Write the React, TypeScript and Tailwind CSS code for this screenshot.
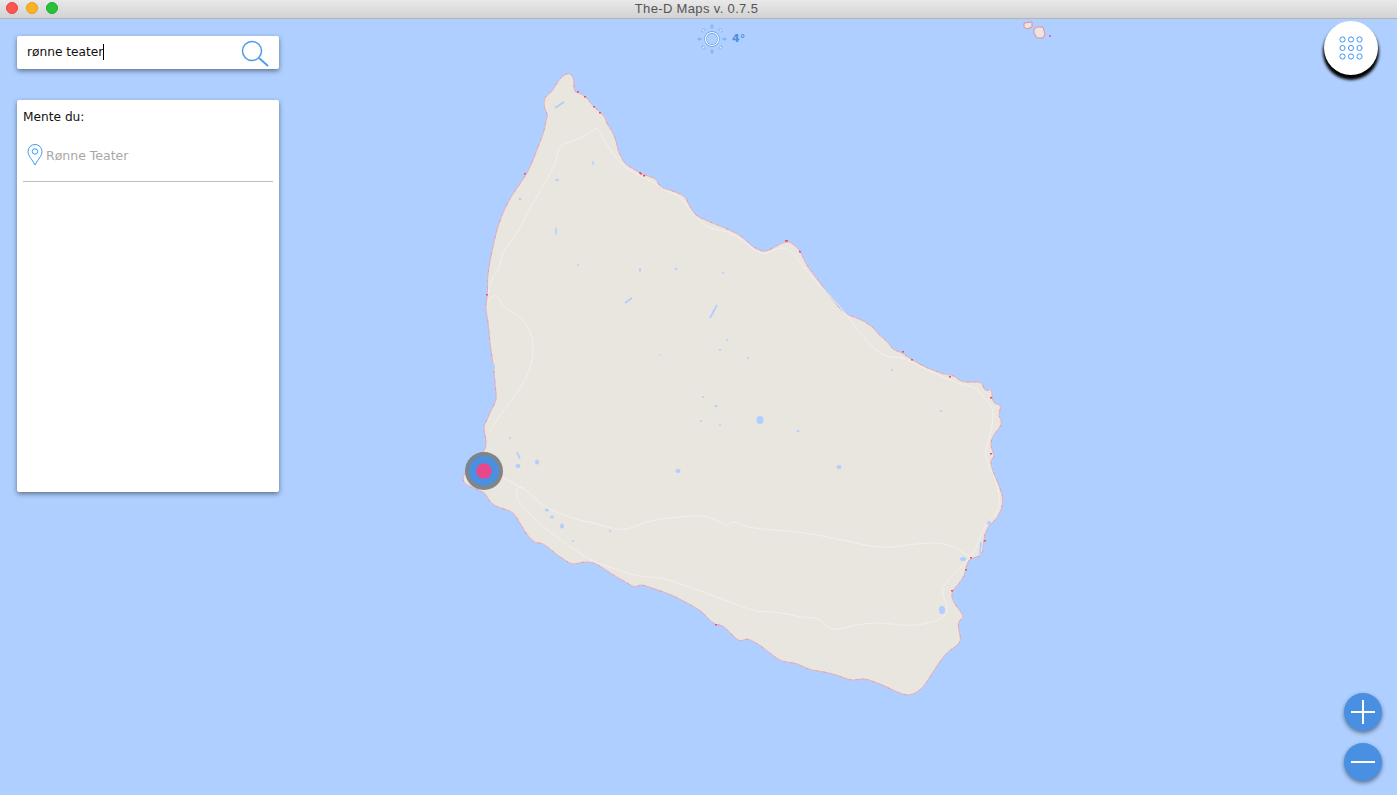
import React from "react";

const coast =
  "568,73 572,75 574,80 574,92 580,93 586,97 590,102 594,107 600,112 605,117 607,124 612,131 616,140 618,151 622,158 625,164 632,168 640,173 648,176 655,178 658,183 661,188 670,190 681,194 686,198 688,203 692,210 695,215 705,220 720,226 732,231 743,237 750,245 762,252 770,250 776,246 787,241 792,243 800,250 804,260 810,270 818,280 826,291 833,300 840,309 848,315 860,319 872,326 878,334 888,342 893,350 901,352 908,357 916,362 927,368 936,371 943,374 952,375 957,378 962,382 972,382 982,382 985,392 992,388 992,403 1002,405 998,415 1003,424 993,435 990,445 995,457 990,460 993,473 1000,487 1004,502 998,518 987,527 983,542 983,555 972,558 967,562 965,575 958,585 951,592 953,602 965,617 959,620 958,628 962,642 950,650 943,657 933,672 923,688 913,695 903,695 887,687 875,682 863,678 853,681 842,677 830,673 818,671 807,669 797,663 782,662 771,654 760,645 747,638 740,642 730,633 723,625 715,625 708,618 700,610 687,603 672,595 655,589 640,584 635,588 624,581 613,575 603,568 593,562 582,562 572,565 565,560 557,555 549,548 542,543 535,543 530,538 525,532 519,521 512,511 500,508 490,503 485,492 473,488 463,483 463,475 470,468 484,452 487,443 483,427 487,420 491,410 497,400 495,385 494,370 490,345 488,320 485,307 488,293 487,278 492,250 498,225 505,208 512,195 522,181 530,168 538,147 544,132 546,120 548,115 544,108 544,97 552,92 558,81 563,76";

const roads = [
  "597,128 587,135 575,140 563,144 558,148 556,162 545,183 533,203 525,218 517,233 508,245 502,253 500,267 490,282 488,295",
  "597,128 604,139 612,153 625,168 640,176 655,183 662,189 680,196 690,210 706,228 727,231 743,240 762,256 775,249 785,247 795,255 810,276 820,285 832,298 848,316 857,330 882,357 900,357 908,360 927,370 957,383 977,388 983,397 993,407 993,423 988,443 984,455 997,482 1000,503 997,513 983,528 978,543 972,557 943,585 942,593 951,617 913,627 880,622 853,625 833,631 823,623 818,618 798,617 780,612 758,612 740,606 717,597 670,580 657,577 640,577 613,568 593,562 568,545 550,532 533,518 517,500 516,488 523,487",
  "490,472 507,480 527,490 545,508 580,521 592,522 622,532 647,521 677,517 708,515 727,527 730,522 737,522 747,528 803,532 847,541 883,549 920,543 947,543 971,557",
  "488,300 495,293 500,300 503,308 520,315 530,330 534,345 531,370 516,395 505,408 490,430",
];

// small lakes, cx cy rx ry
const lakes: [number, number, number, number][] = [
  [593, 163, 0.8, 2], [556, 231, 0.8, 4], [640, 270, 1, 2], [557, 180, 2, 1], [520, 199, 1.5, 1],
  [676, 269, 1.5, 1], [723, 273, 1.5, 0.8], [578, 265, 1, 1], [510, 438, 1, 1], [537, 462, 2, 2.5],
  [518, 466, 2.5, 2], [547, 510, 2, 1.5], [552, 517, 2, 1.5], [562, 526, 2, 2.5], [573, 541, 1, 1],
  [839, 467, 2.5, 2], [760, 420, 3.5, 4], [798, 431, 1.5, 1], [892, 370, 1, 1], [941, 411, 1.5, 0.7],
  [963, 559, 3, 2], [989, 523, 2, 2], [942, 610, 3, 4], [703, 397, 1, 1], [716, 406, 1.5, 1],
  [678, 471, 2.5, 2], [493, 367, 2, 3], [495, 380, 1.5, 1], [727, 340, 1, 1], [720, 350, 1, 1],
  [748, 358, 1, 1], [701, 421, 1, 1], [720, 425, 1, 1], [660, 355, 0.7, 0.7], [610, 531, 1, 1],
];

const lakeStrokes = [
  "555,108 564,102",
  "632,298 625,303",
  "717,305 710,318",
  "517,452 520,459",
  "981,542 980,554",
];

const redSpots: [number, number][] = [
  [640, 173], [787, 241], [578, 92], [594, 107], [600, 113], [525, 174], [487, 295], [800, 252],
  [950, 377], [991, 398], [991, 454], [971, 558], [966, 570], [952, 591], [912, 360], [985, 541],
  [716, 625], [641, 174], [644, 176], [585, 97], [786, 241], [903, 352],
];

// rounds the corners of a point list, so the coast and the roads read as curves
const smooth = (points: string, closed = false) => {
  const p = points.split(" ").map((s) => s.split(",").map(Number));
  const mid = (a: number[], b: number[]) => `${(a[0] + b[0]) / 2},${(a[1] + b[1]) / 2}`;
  if (closed) {
    let d = `M${mid(p[p.length - 1], p[0])}`;
    p.forEach((pt, i) => {
      d += ` Q${pt[0]},${pt[1]} ${mid(pt, p[(i + 1) % p.length])}`;
    });
    return `${d} Z`;
  }
  let d = `M${p[0][0]},${p[0][1]}`;
  for (let i = 1; i < p.length - 1; i++) {
    d += ` Q${p[i][0]},${p[i][1]} ${mid(p[i], p[i + 1])}`;
  }
  return `${d} L${p[p.length - 1][0]},${p[p.length - 1][1]}`;
};

const MapCanvas = () => (
  <svg className="absolute inset-0 h-full w-full" viewBox="0 0 1397 776">
    <g transform="translate(0 -19)">
      <path d={smooth(coast, true)} fill="#e9e5df" stroke="#e6b0bd" strokeWidth="1" />
      <path d={smooth(coast, true)} fill="none" stroke="#e58aa0" strokeWidth="0.7" strokeDasharray="2 5 1 9" />
      {roads.map((d) => (
        <path key={d} d={smooth(d)} fill="none" stroke="#f4f1ed" strokeWidth="0.9" />
      ))}
      {lakes.map(([cx, cy, rx, ry]) => (
        <ellipse key={`${cx}-${cy}`} cx={cx} cy={cy} rx={rx} ry={ry} fill="#aecfff" />
      ))}
      {lakeStrokes.map((d) => (
        <polyline key={d} points={d} fill="none" stroke="#aecfff" strokeWidth="1.7" />
      ))}
      {redSpots.map(([x, y]) => (
        <rect key={`${x}-${y}`} x={x - 1} y={y - 1} width="2" height="1.5" fill="#ee4f68" />
      ))}
      <polygon points="1024,23 1032,22 1032,27 1027,29 1024,27" fill="#e9e5df" stroke="#e88a9f" />
      <polygon points="1034,29 1037,27 1043,27 1045,34 1043,38 1037,38 1034,33" fill="#e9e5df" stroke="#e88a9f" />
      <rect x="1049" y="35" width="2" height="2" fill="#ee6f88" />
      <circle cx="484" cy="471" r="19" fill="#767a7e" fillOpacity="0.9" />
      <circle cx="484" cy="471" r="15" fill="#4a90e2" />
      <circle cx="484" cy="471" r="7.8" fill="#e8478b" />
    </g>
  </svg>
);

const SearchIcon = () => (
  <svg width="30" height="28" viewBox="0 0 30 28" fill="none" stroke="#4f9bef">
    <circle cx="12" cy="12" r="9.5" strokeWidth="1.5" />
    <path d="M19 19 L28 27" strokeWidth="1.8" />
  </svg>
);

const PinIcon = () => (
  <svg width="16" height="22" viewBox="0 0 16 22" fill="none" stroke="#3f97f5" strokeWidth="1">
    <path d="M8 21 C5 15 1 12 1 7.5 A7 7 0 0 1 15 7.5 C15 12 11 15 8 21 Z" />
    <circle cx="8" cy="7.5" r="2.7" />
  </svg>
);

const SunIcon = () => (
  <svg width="30" height="30" viewBox="0 0 30 30" fill="none">
    <circle cx="15" cy="15" r="6.5" stroke="#5a9be6" strokeWidth="2.4" />
    <circle cx="15" cy="15" r="6.5" stroke="#ffffff" strokeWidth="1.2" />
    {[
      [15, 2.5, 0],
      [15, 27.5, 0],
      [2.5, 15, 90],
      [27.5, 15, 90],
      [6.5, 6.5, 45],
      [23.5, 23.5, 45],
      [23.5, 6.5, -45],
      [6.5, 23.5, -45],
    ].map(([x, y, r]) => (
      <ellipse
        key={`${x}-${y}`}
        cx={x}
        cy={y}
        rx="0.9"
        ry="2"
        fill={r === 0 || r === 90 ? "none" : "#ffffff"}
        stroke="#5a9be6"
        strokeWidth="0.6"
        transform={`rotate(${r} ${x} ${y})`}
      />
    ))}
  </svg>
);

const GridIcon = () => (
  <svg width="26" height="26" viewBox="0 0 26 26" fill="none" stroke="#3f97f5" strokeWidth="1">
    {[4.5, 13, 21.5].map((y) =>
      [4.5, 13, 21.5].map((x) => <circle key={`${x}-${y}`} cx={x} cy={y} r="2.6" />),
    )}
  </svg>
);

const ZoomButton = ({ minus }: { minus?: boolean }) => (
  <button className="relative flex h-[38px] w-[38px] items-center justify-center rounded-full bg-[#4a90e2] shadow-[0_2px_4px_rgba(0,0,0,0.45)]">
    <svg width="26" height="26" viewBox="0 0 26 26" stroke="#ffffff" strokeWidth="2">
      <path d="M1 13 H25" />
      {!minus && <path d="M13 1 V25" />}
    </svg>
  </button>
);

export default function App() {
  return (
    <div className="flex h-[795px] w-[1397px] flex-col overflow-hidden font-['DejaVu_Sans',sans-serif]">
      <header className="relative flex h-[19px] shrink-0 items-center justify-center border-b border-[#b4b4b4] bg-gradient-to-b from-[#e9e9e9] to-[#d2d2d2] pr-[4px]">
        <div className="absolute left-[6px] top-[2px] flex gap-2">
          <span className="h-3 w-3 rounded-full border border-[#e2463f] bg-[#fc5753]" />
          <span className="h-3 w-3 rounded-full border border-[#e1a116] bg-[#fdb124]" />
          <span className="h-3 w-3 rounded-full border border-[#1aab29] bg-[#28c138]" />
        </div>
        <span className="font-['Liberation_Sans',sans-serif] text-[13px] tracking-[0.35px] text-[#555555]">
          The-D Maps v. 0.7.5
        </span>
      </header>

      <main className="relative flex flex-1 bg-[#aecfff]">
        <MapCanvas />

        <aside className="relative ml-[17px] mt-[17px] flex w-[262px] flex-col gap-[31px]">
          <div className="flex h-[33px] items-center justify-between rounded-[2px] bg-white pl-[10px] pr-[9px] shadow-[0_2px_5px_rgba(0,0,0,0.45)]">
            <span className="-mt-[1px] flex items-center text-[12.2px] text-[#111]">
              rønne teater
              <span className="h-[16px] w-px bg-black" />
            </span>
            <SearchIcon />
          </div>
          <div className="flex h-[392px] flex-col rounded-[2px] bg-white px-[6px] pt-[9px] shadow-[0_2px_5px_rgba(0,0,0,0.45)]">
            <p className="text-[12.2px] leading-[17px] text-[#111]">Mente du:</p>
            <div className="mt-[18px] flex items-center gap-[3px] border-b border-[#bdbdbd] pb-[15px] pl-[4px]">
              <PinIcon />
              <span className="mt-[2px] text-[12.5px] text-[#a8a8a8]">Rønne Teater</span>
            </div>
          </div>
        </aside>

        <div className="relative ml-[418px] mt-[5px] flex h-[30px] items-center gap-[5px] self-start">
          <SunIcon />
          <span className="text-[11px] font-bold text-[#4a90e2]">4°</span>
        </div>

        <div className="relative ml-auto mr-[15px] flex flex-col items-end justify-between pb-[14px] pt-[2px]">
          <button className="mr-[4px] flex h-[54px] w-[54px] items-center justify-center rounded-full bg-white shadow-[0_4px_3px_1px_rgba(0,0,0,1)]">
            <GridIcon />
          </button>
          <div className="flex flex-col gap-3">
            <ZoomButton />
            <ZoomButton minus />
          </div>
        </div>
      </main>
    </div>
  );
}
